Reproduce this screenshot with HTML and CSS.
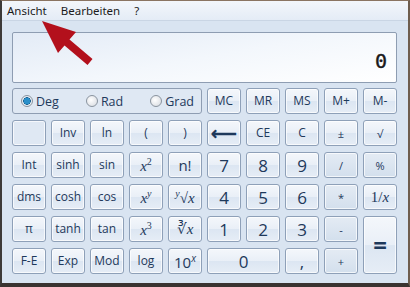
FILE: index.html
```html
<!DOCTYPE html>
<html lang="de">
<head>
  <meta charset="UTF-8">
  <title>Rechner</title>
  <link rel="stylesheet" href="styles.css">
</head>
<body>
  <div class="window">
    <div class="menubar">
      <span class="menu-item">Ansicht</span>
      <span class="menu-item">Bearbeiten</span>
      <span class="menu-item">?</span>
    </div>

    <div class="content">
      <div class="display"><span class="value">0</span></div>

      <div class="keypad">
        <div class="angle-group">
          <label class="radio"><span class="dot checked"></span>Deg</label>
          <label class="radio"><span class="dot"></span>Rad</label>
          <label class="radio"><span class="dot"></span>Grad</label>
        </div>
        <button class="key">MC</button>
        <button class="key">MR</button>
        <button class="key">MS</button>
        <button class="key">M+</button>
        <button class="key">M-</button>

        <button class="key blank"></button>
        <button class="key">Inv</button>
        <button class="key">ln</button>
        <button class="key">(</button>
        <button class="key">)</button>
        <button class="key back">&#x27F5;</button>
        <button class="key">CE</button>
        <button class="key">C</button>
        <button class="key small">±</button>
        <button class="key small">√</button>

        <button class="key">Int</button>
        <button class="key">sinh</button>
        <button class="key">sin</button>
        <button class="key math"><i>x</i><sup>2</sup></button>
        <button class="key big">n!</button>
        <button class="key digit">7</button>
        <button class="key digit">8</button>
        <button class="key digit">9</button>
        <button class="key op">/</button>
        <button class="key op">%</button>

        <button class="key">dms</button>
        <button class="key">cosh</button>
        <button class="key">cos</button>
        <button class="key math"><i>x</i><sup><i>y</i></sup></button>
        <button class="key math"><sup><i>y</i></sup>&#x221A;<i>x</i></button>
        <button class="key digit">4</button>
        <button class="key digit">5</button>
        <button class="key digit">6</button>
        <button class="key op">*</button>
        <button class="key math">1/<i>x</i></button>

        <button class="key">π</button>
        <button class="key">tanh</button>
        <button class="key">tan</button>
        <button class="key math"><i>x</i><sup>3</sup></button>
        <button class="key math">&#x221B;<i>x</i></button>
        <button class="key digit">1</button>
        <button class="key digit">2</button>
        <button class="key digit">3</button>
        <button class="key op">-</button>
        <button class="key equals">=</button>

        <button class="key">F-E</button>
        <button class="key">Exp</button>
        <button class="key">Mod</button>
        <button class="key">log</button>
        <button class="key math ten">10<sup><i>x</i></sup></button>
        <button class="key digit zero">0</button>
        <button class="key digit">,</button>
        <button class="key op">+</button>
      </div>
    </div>

    <!-- Pfeil auf das Menü -->
    <svg class="arrow" width="100" height="70" viewBox="0 0 100 70">
      <polygon points="42,21 76,32 69.5,39.5 92.5,59 87.5,65 64.5,45.5 58,53" fill="#b3101c"/>
    </svg>
  </div>
</body>
</html>
```

FILE: styles.css
```css
body {
  margin: 0;
  background: #3a3330;
  font-family: "Open Sans", "Noto Sans", sans-serif;
}
.window {
  position: relative;
  box-sizing: border-box;
  width: 410px;
  height: 287px;
  background: #d9e4f1;
  border-top: 1px solid #8a7462;
  border-left: 2px solid #3d3a38;
  border-right: 2px solid #6e5d4e;
  border-bottom: 4px solid #3a3330;
  overflow: hidden;
}
.menubar {
  height: 19px;
  display: flex;
  align-items: center;
  padding-left: 5px;
  background: linear-gradient(#f3f6fb, #e4ecf6);
  border-bottom: 1px solid #c9d5e4;
  font-family: "Noto Sans", sans-serif;
  font-size: 11.5px;
  color: #1b1b1b;
}
.menu-item {
  margin-right: 14px;
}
.content {
  padding: 11px 0 0 10px;
}
.display {
  box-sizing: border-box;
  width: 385px;
  height: 51px;
  border: 1px solid #8e9db2;
  border-radius: 2px;
  background: linear-gradient(170deg, #e3ebf6 0%, #f3f7fc 50%, #ffffff 100%);
  display: flex;
  align-items: flex-end;
  justify-content: flex-end;
  padding: 0 9px 11px 0;
}
.value {
  font-family: "DejaVu Sans Mono", monospace;
  font-size: 20px;
  color: #1a1a1a;
  line-height: 1;
  -webkit-text-stroke: 0.4px #1a1a1a;
}
.keypad {
  display: grid;
  grid-template-columns: repeat(10, 34px);
  grid-template-rows: repeat(6, 26px);
  column-gap: 5px;
  row-gap: 6px;
  margin-top: 5px;
}
.angle-group {
  grid-column: 1 / 6;
  box-sizing: border-box;
  border: 1px solid #8e9db2;
  border-radius: 3px;
  background: #dfe8f3;
  display: flex;
  align-items: center;
  justify-content: space-between;
  padding: 0 7px 0 8px;
  font-size: 12.5px;
  color: #1e395b;
}
.radio {
  display: flex;
  align-items: center;
  gap: 3px;
}
.dot {
  box-sizing: border-box;
  width: 12px;
  height: 12px;
  border-radius: 50%;
  border: 1px solid #8a949f;
  background: radial-gradient(circle at 40% 40%, #ffffff, #d4d8de);
}
.dot.checked {
  background: radial-gradient(circle, #2a8fc9 0 3px, #0d5a8c 3.5px, #e8eef5 4px);
}
.key {
  box-sizing: border-box;
  padding: 0;
  border: 1px solid #8ea0b8;
  border-radius: 3px;
  background: linear-gradient(#f4f7fb 0%, #e9eff7 50%, #dce6f2 51%, #e6edf6 100%);
  box-shadow: inset 0 0 0 1px rgba(255, 255, 255, 0.7);
  font-family: "Open Sans", "Noto Sans", sans-serif;
  font-size: 12px;
  color: #1e395b;
  line-height: 1;
}
.key.blank {
  background: #dfe8f3;
}
.key.op {
  background: linear-gradient(#e4ebf4, #d3dfed);
  font-size: 11px;
}
.key.small {
  font-size: 11px;
}
.key.big {
  font-size: 15px;
}
.key.back {
  font-size: 18px;
  font-weight: bold;
}
.key.digit {
  font-size: 17px;
}
.key.math {
  font-family: "Liberation Serif", serif;
  font-size: 15px;
}
.key.math sup {
  font-size: 10px;
}
.key.ten {
  font-family: "Open Sans", sans-serif;
  font-size: 15px;
}
.key.zero {
  grid-column: span 2;
}
.key.equals {
  grid-row: span 2;
  font-size: 24px;
  font-weight: bold;
}
.arrow {
  position: absolute;
  left: -2px;
  top: -1px;
}
```
